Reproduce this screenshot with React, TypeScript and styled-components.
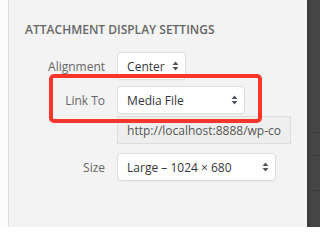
import React from "react";
import styled, { createGlobalStyle } from "styled-components";

const GlobalStyle = createGlobalStyle`
  html, body {
    margin: 0;
    padding: 0;
    background: #ffffff;
  }
  body {
    font-family: "Open Sans", "Liberation Sans", sans-serif;
    -webkit-font-smoothing: antialiased;
  }
`;

const Page = styled.div`
  display: flex;
  width: 320px;
  height: 227px;
  overflow: hidden;
`;

const Gutter = styled.div`
  width: 9px;
  background: #fcfcfc;
  border-right: 1px solid #dddddd;
`;

const Sidebar = styled.div`
  position: relative;
  flex: 1;
  background: #f3f3f3;
  padding: 21px 16px 0 16px;
`;

const DarkEdge = styled.div`
  width: 11px;
  display: flex;
  flex-direction: column;
  background: #454545;
  border-left: 3px solid #3c3c3c;
`;

const EdgeBlock = styled.div<{ $h: number }>`
  height: ${(p) => p.$h}px;
  border-bottom: 1px solid #3a3a3a;
`;

const Heading = styled.h2`
  margin: 0;
  font-size: 12px;
  line-height: 18px;
  font-weight: 600;
  text-transform: uppercase;
  color: #666666;
  letter-spacing: 0;
`;

const Settings = styled.div`
  display: grid;
  grid-template-columns: 80px 1fr;
  column-gap: 12px;
  margin-top: 13px;
`;

const Label = styled.span<{ $top?: number }>`
  grid-column: 1;
  align-self: center;
  text-align: right;
  font-size: 12px;
  color: #666666;
  margin-top: ${(p) => p.$top ?? 0}px;
`;

const Field = styled.div<{ $top?: number }>`
  grid-column: 2;
  display: flex;
  margin-top: ${(p) => p.$top ?? 0}px;
`;

const SelectBox = styled.div<{ $width: number }>`
  box-sizing: border-box;
  display: flex;
  align-items: center;
  justify-content: space-between;
  width: ${(p) => p.$width}px;
  height: 28px;
  padding: 0 6px 0 9px;
  background: #ffffff;
  border: 1px solid #dddddd;
  border-radius: 4px;
  box-shadow: 0 1px 1px rgba(0, 0, 0, 0.03);
  font-size: 12px;
  color: #32373c;
  white-space: nowrap;
`;

const UrlInput = styled.input`
  box-sizing: border-box;
  width: 174px;
  height: 28px;
  margin: 0;
  padding: 0 9px;
  background: #eeeeee;
  border: 1px solid #dddddd;
  border-radius: 0;
  font-family: "Open Sans", "Liberation Sans", sans-serif;
  font-size: 12px;
  color: #555555;
  outline: none;
`;

const Highlight = styled.div`
  position: absolute;
  left: 40px;
  top: 74px;
  width: 213px;
  height: 49px;
  box-sizing: border-box;
  border: 4px solid #f8352b;
  border-radius: 5px;
  pointer-events: none;
`;

function Arrows() {
  return (
    <svg width="7" height="10" viewBox="0 0 7 10">
      <path d="M3.5 0.5 L6.5 4 L0.5 4 Z" fill="#50575e" />
      <path d="M3.5 9.5 L6.5 6 L0.5 6 Z" fill="#50575e" />
    </svg>
  );
}

function Select({ value, width }: { value: string; width: number }) {
  return (
    <SelectBox $width={width}>
      <span>{value}</span>
      <Arrows />
    </SelectBox>
  );
}

export default function App() {
  return (
    <Page>
      <GlobalStyle />
      <Gutter />
      <Sidebar>
        <Heading>Attachment Display Settings</Heading>
        <Settings>
          <Label>Alignment</Label>
          <Field>
            <Select value="Center" width={69} />
          </Field>

          <Label $top={6}>Link To</Label>
          <Field $top={6}>
            <Select value="Media File" width={128} />
          </Field>

          <Field $top={2}>
            <UrlInput
              readOnly
              value="http://localhost:8888/wp-content/uploads/2016/03/photo.jpg"
            />
          </Field>

          <Label $top={9}>Size</Label>
          <Field $top={9}>
            <Select value="Large – 1024 × 680" width={159} />
          </Field>
        </Settings>
        <Highlight />
      </Sidebar>
      <DarkEdge>
        <EdgeBlock $h={132} />
        <EdgeBlock $h={22} />
        <EdgeBlock $h={34} />
      </DarkEdge>
    </Page>
  );
}
